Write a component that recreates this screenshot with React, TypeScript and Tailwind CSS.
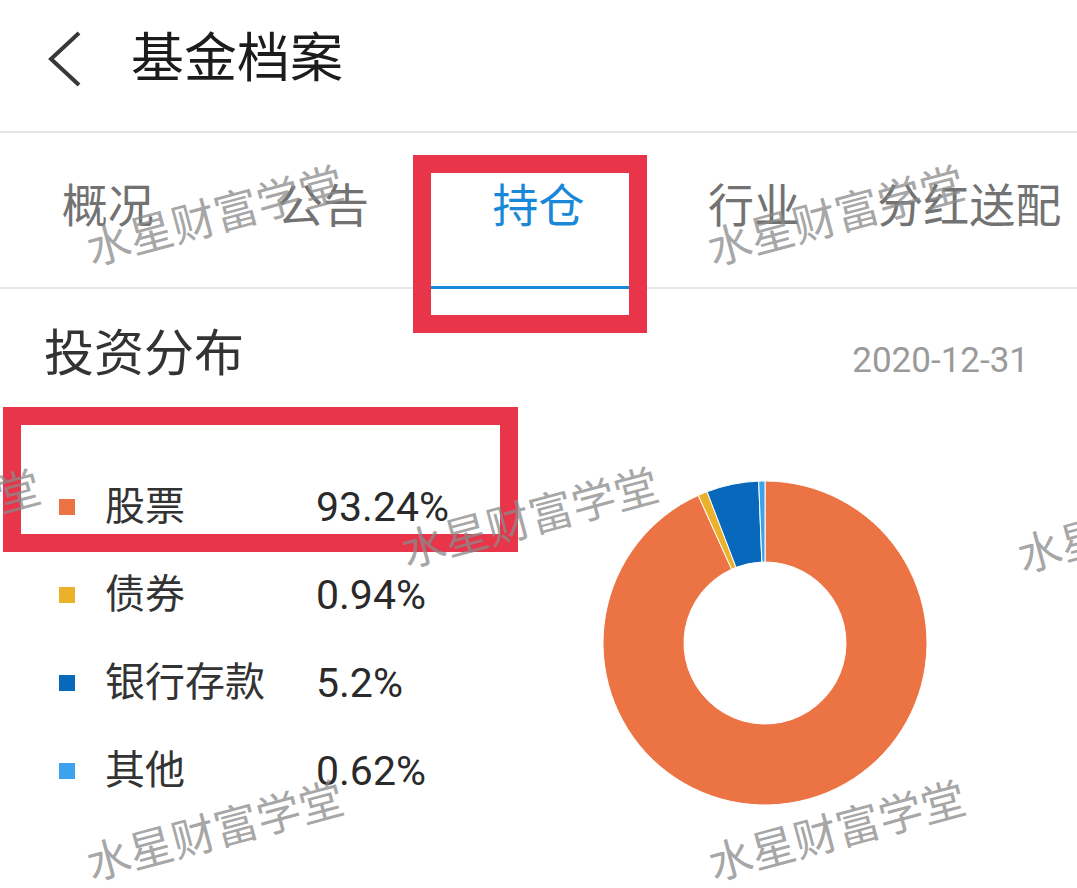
import React from 'react';

const FONT = { fontFamily: 'Roboto, "Noto Sans CJK SC", "Noto Sans", sans-serif' };

const tabs = ['概况', '公告', '持仓', '行业', '分红送配'];

const assets = [
  { name: '股票', value: 93.24, label: '93.24%', color: '#EC7444' },
  { name: '债券', value: 0.94, label: '0.94%', color: '#EBB12B' },
  { name: '银行存款', value: 5.2, label: '5.2%', color: '#0869BC' },
  { name: '其他', value: 0.62, label: '0.62%', color: '#3BA3EE' },
];

// watermark centres, taken from the screenshot
const marks = [
  { x: 215, y: 217 },
  { x: 836, y: 217 },
  { x: -88, y: 521 },
  { x: 530, y: 519 },
  { x: 1146, y: 524 },
  { x: 215, y: 832 },
  { x: 837, y: 832 },
];

const polar = (cx: number, cy: number, r: number, a: number) => [
  cx + r * Math.cos(a),
  cy + r * Math.sin(a),
];

const ringSlice = (cx: number, cy: number, ro: number, ri: number, a0: number, a1: number) => {
  const large = a1 - a0 > Math.PI ? 1 : 0;
  const [x0, y0] = polar(cx, cy, ro, a0);
  const [x1, y1] = polar(cx, cy, ro, a1);
  const [x2, y2] = polar(cx, cy, ri, a1);
  const [x3, y3] = polar(cx, cy, ri, a0);
  return `M${x0} ${y0} A${ro} ${ro} 0 ${large} 1 ${x1} ${y1} L${x2} ${y2} A${ri} ${ri} 0 ${large} 0 ${x3} ${y3} Z`;
};

const Donut: React.FC = () => {
  const total = assets.reduce((s, a) => s + a.value, 0);
  let start = -Math.PI / 2;
  return (
    <svg width="324" height="324" viewBox="0 0 324 324">
      {assets.map((a) => {
        const sweep = (a.value / total) * Math.PI * 2;
        const d = ringSlice(162, 162, 162, 81, start, start + sweep);
        start += sweep;
        return <path key={a.name} d={d} fill={a.color} stroke="#ffffff" strokeWidth="1" />;
      })}
    </svg>
  );
};

export default function App() {
  return (
    <div className="relative w-full h-[888px] overflow-hidden bg-white" style={FONT}>
      {/* Header */}
      <div className="flex items-center h-[133px] pb-[13px] border-b-2 border-[#e4e4e4]">
        <svg width="34" height="56" viewBox="0 0 34 56" className="ml-[47px]">
          <polyline points="32,2 4,28 32,54" fill="none" stroke="#383838" strokeWidth="4" />
        </svg>
        <h1 className="ml-[50px] text-[53px] leading-none text-[#1c1c1c] font-normal">基金档案</h1>
      </div>

      {/* Tabs */}
      <div className="flex h-[156px] border-b-2 border-[#e6e6e6]">
        {tabs.map((t) => {
          const active = t === '持仓';
          return (
            <div key={t} className="relative flex-1 flex justify-center items-start pt-[50px]">
              <span className={`text-[46px] leading-none ${active ? 'text-[#1a88d8]' : 'text-[#727272]'}`}>{t}</span>
              {active && <div className="absolute left-0 right-0 bottom-[-2px] h-[3px] bg-[#1a88d8]" />}
            </div>
          );
        })}
      </div>

      {/* Section title */}
      <div className="flex justify-between items-start h-[174px] pt-[40px] pl-[44px] pr-[48px]">
        <h2 className="text-[50px] leading-none text-[#333333] font-normal">投资分布</h2>
        <span className="mt-[14px] text-[35px] leading-none text-[#9a9a9a]">2020-12-31</span>
      </div>

      {/* Distribution */}
      <div className="flex pr-[150px]">
        <div className="flex flex-col pl-[59px]">
          {assets.map((a) => (
            <div key={a.name} className="flex items-center h-[88px]">
              <span className="w-4 h-4 shrink-0" style={{ backgroundColor: a.color }} />
              <span className="ml-[30px] w-[211px] text-[40px] leading-none text-[#333333]">{a.name}</span>
              <span className="text-[41px] leading-none text-[#2a2a2a]">{a.label}</span>
            </div>
          ))}
        </div>
        <div className="ml-auto mt-[18px]">
          <Donut />
        </div>
      </div>

      {/* Annotation boxes */}
      <div className="absolute left-[413px] top-[155px] w-[234px] h-[178px] border-[18px] border-[#e8354a]" />
      <div className="absolute left-[3px] top-[407px] w-[515px] h-[145px] border-[18px] border-[#e8354a]" />

      {/* Watermarks */}
      {marks.map((m, i) => (
        <div
          key={i}
          className="absolute pointer-events-none whitespace-nowrap -translate-x-1/2 -translate-y-1/2 -rotate-[15deg] text-[44px] leading-none text-[#8a8a8a]/75"
          style={{ left: m.x, top: m.y }}
        >
          水星财富学堂
        </div>
      ))}
    </div>
  );
}
